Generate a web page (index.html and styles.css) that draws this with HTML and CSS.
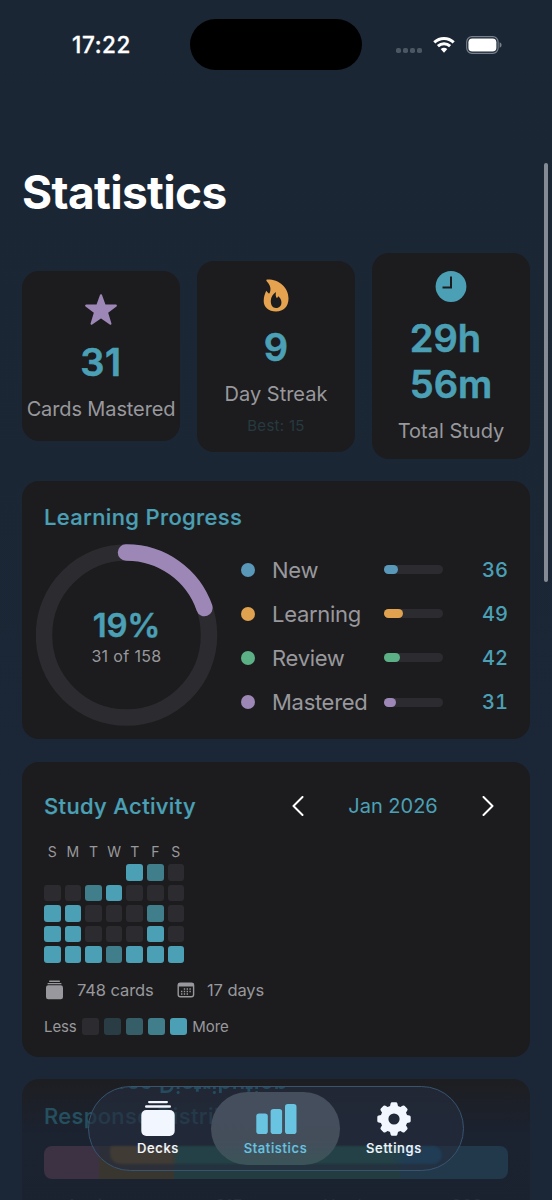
FILE: index.html
```html
<!DOCTYPE html>
<html lang="en">
<head>
<meta charset="utf-8">
<title>Statistics</title>
<link rel="stylesheet" href="styles.css">
</head>
<body>
<div class="screen">
  <header class="status">
    <span class="time">17:22</span>
    <div class="island"></div>
    <div class="signals">
      <svg width="28" height="6" viewBox="0 0 28 6" fill="#4c5764"><rect x="0" y="1" width="5" height="5" rx="1.8"/><rect x="7" y="1" width="5" height="5" rx="1.8"/><rect x="14" y="1" width="5" height="5" rx="1.8"/><rect x="21" y="1" width="5" height="5" rx="1.8"/></svg>
      <svg class="wifi" width="22" height="18" viewBox="0 0 22 18" fill="none" stroke="#fff" stroke-width="3"><path d="M1.3 6.4C6.8 1.1 15.2 1.1 20.7 6.4"/><path d="M4.9 10.2C8.4 6.9 13.6 6.9 17.1 10.2"/><path d="M7.7 13.1Q11 10.2 14.3 13.1L11 16.7Z" fill="#fff" stroke="none"/></svg>
      <svg class="battery" width="36" height="18" viewBox="0 0 36 18"><rect x=".7" y=".7" width="31.4" height="16.6" rx="5.2" fill="none" stroke="#77808b" stroke-width="1.2"/><rect x="2.4" y="2.4" width="28" height="13.2" rx="3.8" fill="#fff"/><path d="M33.600 6.3Q35.600 7 35.600 9T33.600 11.7Z" fill="#77808b"/></svg>
    </div>
  </header>

  <h1 class="title">Statistics</h1>

  <section class="stats">
    <div class="card stat stat-a">
      <svg class="stat-icon" viewBox="0 0 34 34"><path d="M17 2.4 20.6 12.4 31.8 12.7 22.9 19.3 26.4 30.7 17 24 7.6 30.7 11.1 19.3 2.2 12.7 13.4 12.4Z" fill="#9d87b6" stroke="#9d87b6" stroke-width="2.2" stroke-linejoin="round"/></svg>
      <div class="num">31</div>
      <div class="label l1">Cards Mastered</div>
    </div>
    <div class="card stat stat-b">
      <svg class="stat-icon" viewBox="0 0 34 34"><path fill="#e6a34f" fill-rule="evenodd" d="M8 .5C19 0 29.500 7.500 29.500 19.500C29.500 27.500 24.500 32.500 17 32.500C9.500 32.500 4.700 28.200 4.700 22C4.700 18 5.800 15 7.200 11.800L9.200 14.100Q10 15 10.600 13.900C12.500 10.500 11.500 6 7.700 2.200Q6.600 .6 8 .5ZM17 13C13.800 15 12 18 11.800 21.500C11.600 26 13.500 29 17 29C20.600 29 22.600 26.500 22.400 23C22.300 20.500 21 18.700 19.300 17.200L18 19.300C16.500 17.700 16.500 15.500 17 13Z"/></svg>
      <div class="num">9</div>
      <div class="label l2">Day Streak</div>
      <div class="best">Best: 15</div>
    </div>
    <div class="card stat stat-c">
      <svg class="stat-icon" viewBox="0 0 34 34"><circle cx="17" cy="16.500" r="15.400" fill="#4ba0b6"/><path d="M17 6.500V17.500H8.500" fill="none" stroke="#1c1c1e" stroke-width="2"/></svg>
      <div class="num two">29h<br>56m</div>
      <div class="label l3">Total Study</div>
    </div>
  </section>

  <section class="card progress">
    <h2>Learning Progress</h2>
    <div class="progress-body">
      <div class="ring">
        <svg width="182" height="182" viewBox="0 0 182 182" fill="none" stroke-width="16.500"><circle cx="90.500" cy="91" r="82.500" stroke="#2c2c30"/><path d="M90 8.500A82.500 82.500 0 0 1 168.500 64" stroke="#9d87b6" stroke-linecap="round"/></svg>
        <div class="ring-text"><b>19%</b><span>31 of 158</span></div>
      </div>
      <div class="rows">
        <div class="row blue"><i class="dot"></i><span class="name">New</span><i class="track"><i class="fill" style="width:13.500px"></i></i><span class="val">36</span></div>
        <div class="row orange"><i class="dot"></i><span class="name">Learning</span><i class="track"><i class="fill" style="width:18.500px"></i></i><span class="val">49</span></div>
        <div class="row green"><i class="dot"></i><span class="name">Review</span><i class="track"><i class="fill" style="width:15.500px"></i></i><span class="val">42</span></div>
        <div class="row purple"><i class="dot"></i><span class="name">Mastered</span><i class="track"><i class="fill" style="width:11.500px"></i></i><span class="val">31</span></div>
      </div>
    </div>
  </section>

  <section class="card activity">
    <div class="activity-head">
      <h2>Study Activity</h2>
      <div class="month">
        <svg width="12" height="20" viewBox="0 0 12 20"><path d="M10.500 1 1.500 10 10.500 19"/></svg>
        <span>Jan 2026</span>
        <svg width="12" height="20" viewBox="0 0 12 20"><path d="M1.500 1 10.500 10 1.500 19"/></svg>
      </div>
    </div>
    <div class="days"><span>S</span><span>M</span><span>T</span><span>W</span><span>T</span><span>F</span><span>S</span></div>
    <div class="heat">
      <i class="none"></i><i class="none"></i><i class="none"></i><i class="none"></i><i class="v4"></i><i class="v3"></i><i></i>
      <i></i><i></i><i class="v3"></i><i class="v4"></i><i></i><i></i><i></i>
      <i class="v4"></i><i class="v4"></i><i></i><i></i><i></i><i class="v3"></i><i></i>
      <i class="v4"></i><i class="v4"></i><i></i><i></i><i></i><i class="v4"></i><i></i>
      <i class="v4"></i><i class="v4"></i><i class="v4"></i><i class="v3"></i><i class="v4"></i><i class="v4"></i><i class="v4"></i>
    </div>
    <div class="meta">
      <svg width="21" height="20" viewBox="0 0 21 20" fill="#98989d"><rect x="5" y=".6" width="11" height="1.300" rx=".6"/><rect x="3.500" y="2.900" width="14" height="1.400" rx=".6"/><rect x="2" y="5.200" width="17" height="14" rx="2.200"/></svg>
      <span class="m1">748 cards</span>
      <svg class="cal" width="18" height="18" viewBox="0 0 18 18"><rect x="1.200" y="2.200" width="15.400" height="13.600" rx="2.200" fill="none" stroke="#98989d" stroke-width="1.400"/><path d="M1 2.500H16.800V5.500H1Z" fill="#98989d"/><path d="M6.800 8H14.500M4 10.500H14.500M4 13H11.500" stroke="#98989d" stroke-width="1.300" stroke-dasharray="1.400 1.400"/></svg>
      <span class="m2">17 days</span>
    </div>
    <div class="legend"><span class="less">Less</span><i></i><i class="v1"></i><i class="v2"></i><i class="v3"></i><i class="v4"></i><span class="more">More</span></div>
  </section>

  <section class="card response">
    <h2>Response Distribution</h2>
    <div class="dist"><i class="again"></i><i class="hard"></i><i class="good"></i><i class="easy"></i></div>
    <div class="counts"><span>Again</span><span>215</span><span>Hard</span><span>368</span></div>
  </section>

  <div class="scrollbar"></div>

  <nav class="tabbar">
    <div class="refraction" aria-hidden="true"><div class="mirror">Response Distribution</div><div class="strip"></div></div>
    <a class="tab">
      <svg width="36" height="36" viewBox="0 0 36 36" fill="#f2f7ff"><rect x="8" y="0" width="20" height="2.200" rx="1.100"/><rect x="5" y="4.300" width="26" height="2.400" rx="1.200"/><rect x="1.300" y="9" width="33.400" height="26" rx="5"/></svg>
      <span>Decks</span>
    </a>
    <a class="tab active">
      <svg width="42" height="36" viewBox="0 0 42 36" fill="#68c4e1"><rect x="1.300" y="12.500" width="11.500" height="20.500" rx="2.800"/><rect x="15.600" y="8" width="11.500" height="25" rx="2.800"/><rect x="30" y="3" width="11.500" height="30" rx="2.800"/></svg>
      <span>Statistics</span>
    </a>
    <a class="tab">
      <svg width="36" height="36" viewBox="0 0 36 36"><g fill="#f2f7ff"><path id="tooth" d="M13.700 6.500 14.600 2.600Q14.900 1.300 16.100 1.300H19.900Q21.100 1.300 21.400 2.600L22.300 6.500Z"/><use href="#tooth" transform="rotate(45 18 18)"/><use href="#tooth" transform="rotate(90 18 18)"/><use href="#tooth" transform="rotate(135 18 18)"/><use href="#tooth" transform="rotate(180 18 18)"/><use href="#tooth" transform="rotate(225 18 18)"/><use href="#tooth" transform="rotate(270 18 18)"/><use href="#tooth" transform="rotate(315 18 18)"/></g><circle cx="18" cy="18" r="9.600" fill="none" stroke="#f2f7ff" stroke-width="8"/></svg>
      <span>Settings</span>
    </a>
  </nav>
</div>
</body>
</html>
```
FILE: styles.css
```css
* { box-sizing: border-box; }
body { margin: 0; background: #1b2736; font-family: Inter, "Liberation Sans", sans-serif; }
h1, h2 { margin: 0; }
i { display: block; font-style: normal; }
svg { display: block; flex: none; }
.screen { position: relative; width: 552px; height: 1200px; overflow: hidden; padding: 0 22px; background: linear-gradient(#1b2634, #1b2737); color: #98989d; white-space: nowrap; }

.status { display: grid; grid-template-columns: 168px 172px 168px; height: 90px; padding-top: 19px; }
.time { padding-left: 50px; line-height: 52px; font-size: 22.500px; font-weight: 500; color: #fff; letter-spacing: .6px; -webkit-text-stroke: .3px #fff; }
.island { height: 50.500px; border-radius: 26px; background: #000; }
.signals { display: flex; align-items: flex-start; padding: 17px 0 0 34px; }
.signals svg:first-child { margin-top: 11px; }
.wifi { margin-left: 9px; }
.battery { margin-left: 10.500px; }

.title { height: 163px; padding: 72px 0 0; line-height: 60px; font-size: 46px; font-weight: 700; color: #fff; letter-spacing: -.65px; }

.card { border-radius: 17px; background: #1c1c1e; }
.stats { display: grid; grid-template-columns: repeat(3, 158px); gap: 17px; align-items: center; height: 206px; }
.stat { display: flex; flex-direction: column; align-items: center; }
.stat-a { height: 170px; padding-top: 22px; }
.stat-b { height: 191px; padding-top: 18px; }
.stat-c { height: 206px; padding-top: 17px; }
.stat-icon { width: 34px; height: 34px; }
.num { margin: 11px 0; line-height: 46px; font-size: 38px; font-weight: 600; color: #4ba0b6; -webkit-text-stroke: .6px #4ba0b6; }
.stat-a .num { margin: 12px 0 10px; letter-spacing: .6px; }
.label { line-height: 26px; font-size: 20px; }
.l1 { line-height: 28px; letter-spacing: -.12px; }
.best { margin-top: 9px; line-height: 20px; font-size: 15px; color: #263a40; letter-spacing: .3px; }

h2 { font-size: 22px; font-weight: 500; line-height: 28px; color: #4ba0b6; letter-spacing: .35px; -webkit-text-stroke: .2px; }
.progress { height: 258px; margin-top: 22px; padding: 22px 22px 0 13.500px; }
.progress h2 { padding-left: 8.500px; }
.progress-body { display: flex; align-items: flex-start; margin-top: 13px; }
.ring { display: grid; width: 182px; height: 182px; }
.ring > * { grid-area: 1 / 1; }
.ring-text { display: flex; flex-direction: column; align-items: center; padding-top: 60px; }
.ring-text b { line-height: 42px; font-size: 33px; font-weight: 600; color: #4ba0b6; letter-spacing: -.3px; -webkit-text-stroke: .4px #4ba0b6; }
.ring-text span { line-height: 20px; font-size: 16px; letter-spacing: .35px; }
.rows { flex: 1; padding: 3.500px 0 0 23.500px; }
.row { display: grid; grid-template-columns: 14px 129px 59px 1fr; align-items: center; height: 44.200px; }
.name { padding-left: 17px; font-size: 22px; letter-spacing: -.3px; }
.dot { width: 14px; height: 14px; border-radius: 50%; background: var(--c); }
.track { height: 9px; border-radius: 5px; background: #2c2c30; }
.fill { height: 9px; border-radius: 5px; background: var(--c); }
.val { text-align: right; font-size: 20px; font-weight: 500; color: #4ba0b6; font-variant-numeric: tabular-nums; }
.blue { --c: #5a98b9; }
.orange { --c: #e0a24e; }
.green { --c: #5cb085; }
.purple { --c: #9d87b6; }

.activity { height: 295px; margin-top: 23px; padding: 30px 22px 0; }
.activity-head { display: flex; justify-content: space-between; align-items: center; height: 28px; }
.month { display: flex; align-items: center; justify-content: space-between; width: 202px; margin-right: 14px; font-size: 20px; color: #4ba0b6; }
.month path { fill: none; stroke: #fff; stroke-width: 2; stroke-linecap: round; stroke-linejoin: round; }
.days, .heat { display: grid; grid-template-columns: repeat(7, 16.600px); gap: 4px; }
.days { margin-top: 23px; height: 21px; line-height: 18px; font-size: 14px; text-align: center; }
.heat i, .legend i { width: 16.600px; height: 16.600px; border-radius: 3px; background: #2c2c30; }
.heat .none { background: none; }
.heat .v4, .legend .v4 { background: #4ba0b6; }
.heat .v3, .legend .v3 { background: #417e8c; }
.legend .v2 { background: #355e69; }
.legend .v1 { background: #2a3d45; }
.meta { display: flex; align-items: center; height: 24px; margin-top: 15px; font-size: 16.500px; }
.m1 { width: 111.500px; padding-left: 12px; letter-spacing: -.1px; }
.m2 { padding-left: 12.500px; letter-spacing: -.1px; }
.legend { display: flex; align-items: center; gap: 5.400px; height: 20px; margin-top: 14.500px; font-size: 15px; letter-spacing: -.1px; }
.less { width: 33px; }

.response { height: 150px; margin-top: 22px; padding: 23px 22px 0; background: linear-gradient(#1d1e21, #1b2230 55px, #1a2230); }
.response h2 { color: #255060; }
.dist { display: grid; grid-template-columns: 55px 75px 226px 1fr; height: 33px; margin-top: 16px; border-radius: 8px; overflow: hidden; }
.again { background: #3c3244; }
.hard { background: #39352f; }
.good { background: #223c40; }
.easy { background: #21394b; }
.counts { display: grid; grid-template-columns: 149px 108px 128px 1fr; margin-top: 15px; padding-left: 22px; line-height: 24px; font-size: 17px; color: #252f3c; }

.scrollbar { position: absolute; top: 163px; right: 4px; width: 4px; height: 419px; border-radius: 2px; background: #858b95; }

.tabbar { position: absolute; left: 88px; top: 1086px; display: grid; grid-template-columns: repeat(3, 118px); width: 376px; height: 85px; padding: 5px 10px; border: 1px solid #38546f; border-radius: 43px; background: #252d3ea6; }
.refraction { position: absolute; inset: 0; overflow: hidden; border-radius: 42px; }
.mirror { height: 24px; margin: -14px 0 0 -44px; line-height: 24px; font-size: 22px; font-weight: 600; color: #244c5e; transform: scaleY(-1); filter: blur(.7px); letter-spacing: .4px; clip-path: inset(0 0 0 73px); }
.strip { width: 332px; height: 18px; margin: 49px 0 0 21px; border-radius: 4px 12px 12px 14px; background: linear-gradient(90deg, #403b35 62px, #234146 68px 282px, #203d55 296px); filter: blur(1px); }
.tab { position: relative; display: flex; flex-direction: column; align-items: center; height: 73px; padding-top: 9px; color: #f2f7ff; font-size: 13px; font-weight: 500; line-height: 20px; letter-spacing: .65px; -webkit-text-stroke: .15px; }
.active { width: 129px; margin-left: -6px; border-radius: 37px; background: linear-gradient(#454e5d, #444e5b 65%, #3a5459); color: #68c4e1; }
.tab span { margin-top: 1px; }
```
